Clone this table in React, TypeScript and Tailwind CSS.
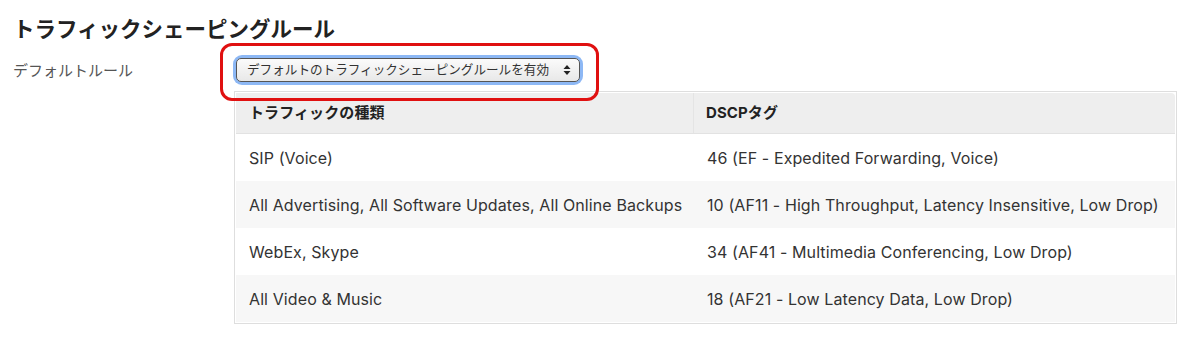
import React from "react";

const rows = [
  ["SIP (Voice)", "46 (EF - Expedited Forwarding, Voice)"],
  [
    "All Advertising, All Software Updates, All Online Backups",
    "10 (AF11 - High Throughput, Latency Insensitive, Low Drop)",
  ],
  ["WebEx, Skype", "34 (AF41 - Multimedia Conferencing, Low Drop)"],
  ["All Video & Music", "18 (AF21 - Low Latency Data, Low Drop)"],
];

export default function App() {
  return (
    <div
      className="relative w-[1200px] h-[341px] bg-white text-[#333]"
      style={{ fontFamily: 'Inter, "Noto Sans CJK JP", sans-serif' }}
    >
      <div className="pl-[13px] pt-[14px]">
        <h1 className="text-[21.5px] leading-[30px] font-bold text-[#222]">
          トラフィックシェーピングルール
        </h1>
        <div className="flex mt-[14px]">
          <div className="w-[221px] text-[15px] leading-[24px] text-[#555] pt-[1px]">
            デフォルトルール
          </div>
          <div className="flex flex-col">
            <div className="ml-[2px] w-[344px] h-[24px] rounded-[6px] ring-[3px] ring-[#8db8f5]">
              <div className="h-full rounded-[5px] border border-[#555] bg-gradient-to-b from-[#fbfbfb] to-[#e8e8e8] flex items-center pl-[10px] pr-[8px] text-[12.6px] text-[#333] whitespace-nowrap">
                <span className="flex-1">
                  デフォルトのトラフィックシェーピングルールを有効
                </span>
                <svg width="8" height="12" viewBox="0 0 8 12">
                  <path d="M4 1 L7.5 5 L0.5 5 Z" fill="#222" />
                  <path d="M4 11 L7.5 7 L0.5 7 Z" fill="#222" />
                </svg>
              </div>
            </div>
            <div className="mt-[9px] w-[943px] border border-[#dedede] p-[1px] text-[16px] tracking-[0.1px]">
              <div className="flex h-[41px] bg-[#eeeeee] rounded-tr-[4px] font-bold text-[#222] border-b border-[#e2e2e2] text-[15px]">
                <div className="w-[458px] pl-[13px] flex items-center border-r border-[#e4e4e4]">
                  トラフィックの種類
                </div>
                <div className="flex-1 pl-[12px] flex items-center">DSCPタグ</div>
              </div>
              {rows.map((r, i) => (
                <div
                  key={i}
                  className={
                    "flex h-[47px] items-center " +
                    (i % 2 === 1 ? "bg-[#f7f7f7]" : "bg-white")
                  }
                >
                  <div className="w-[458px] pl-[13px]">{r[0]}</div>
                  <div className="flex-1 pl-[13px]">{r[1]}</div>
                </div>
              ))}
            </div>
          </div>
        </div>
      </div>
      <div className="absolute left-[220px] top-[43px] w-[379px] h-[58px] border-[3.5px] border-[#e01010] rounded-[12px]" />
    </div>
  );
}
